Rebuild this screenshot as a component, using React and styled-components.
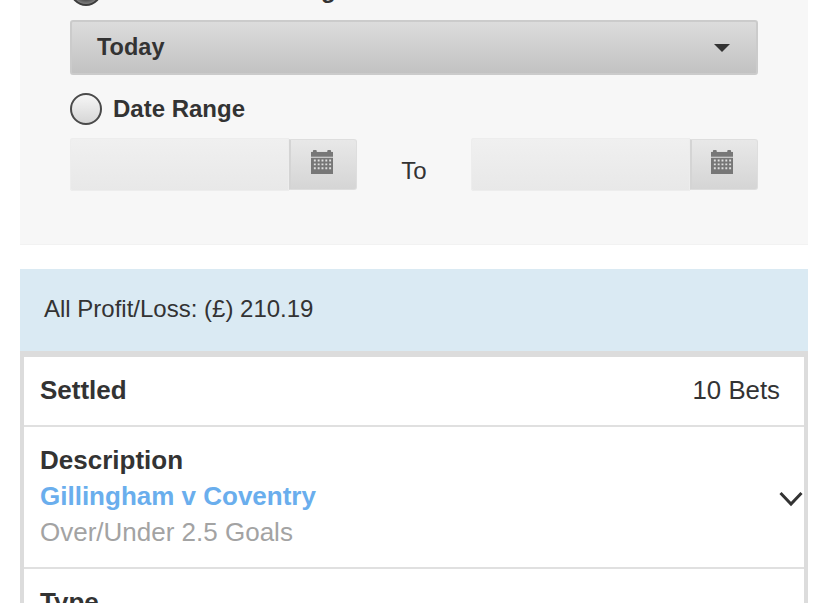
import React from 'react'
import styled, { createGlobalStyle } from 'styled-components'

const Global = createGlobalStyle`
  html, body { margin: 0; padding: 0; background: #fff; overflow: hidden; }
  body { font-family: "Liberation Sans", Arial, sans-serif; color: #333; }
`
const Page = styled.div`
  width: 828px;
  height: 603px;
  overflow: hidden;
  padding: 0 20px;
  box-sizing: border-box;
`
const FilterPanel = styled.div`
  background: #f7f7f7;
  height: 245px;
  padding: 0 50px;
  box-sizing: border-box;
  overflow: hidden;
  border-bottom: 1px solid #f2f2f2;
`
const RadioRow = styled.div`
  display: flex;
  align-items: center;
  gap: 11px;
  height: 32px;
  margin: ${p => p.$clipped ? '-26px 0 14px' : '18px 0 13px'};
`
const Radio = styled.span`
  width: 28px;
  height: 28px;
  border-radius: 50%;
  border: 2px solid ${p => p.$checked ? '#3c3c3c' : '#4a4a4a'};
  background: ${p => p.$checked
    ? 'radial-gradient(circle, #444 0 45%, #8a8a8a 75%)'
    : 'linear-gradient(#f6f6f6, #d6d6d6)'};
  flex: none;
`
const RadioLabel = styled.span`
  font-size: 24px;
  font-weight: 700;
`
const Select = styled.div`
  height: 55px;
  box-sizing: border-box;
  display: flex;
  align-items: center;
  justify-content: space-between;
  padding: 0 26px 1px 25px;
  font-size: 23.5px;
  font-weight: 700;
  background: linear-gradient(#dcdcdc, #c2c2c2);
  border: 2px solid #cbcbcb;
  border-radius: 3px;
`
const Caret = styled.span`
  width: 0;
  height: 0;
  margin-top: 1px;
  border-left: 8px solid transparent;
  border-right: 8px solid transparent;
  border-top: 8px solid #333;
`
const DateRow = styled.div`
  display: flex;
  align-items: center;
  justify-content: space-between;
`
const DateField = styled.div`
  display: flex;
  width: 287px;
  height: 53px;
`
const DateInput = styled.div`
  flex: 1;
  background: linear-gradient(#f0f0f0, #e8e8e8);
  border-radius: 3px 0 0 3px;
  box-shadow: inset 0 0 0 1px #ededed;
`
const DateButton = styled.div`
  width: 68px;
  margin-top: 1px;
  height: 51px;
  display: flex;
  align-items: center;
  justify-content: center;
  padding: 0 4px 5px 0;
  background: linear-gradient(#e8e8e8, #d5d5d5);
  border: 1px solid #dedede;
  border-left: 2px solid #d4d4d4;
  border-radius: 0 3px 3px 0;
  box-sizing: border-box;
`
const ToLabel = styled.span`
  font-size: 24px;
  margin-top: 12px;
`
const ProfitBar = styled.div`
  margin-top: 24px;
  height: 82px;
  display: flex;
  align-items: center;
  padding: 0 24px 2px;
  box-sizing: border-box;
  background: #daeaf3;
  font-size: 24px;
  color: #333;
`
const BetCard = styled.div`
  border: 4px solid #dcdcdc;
  border-top-width: 6px;
  border-bottom: 0;
  background: #fff;
`
const Row = styled.div`
  display: flex;
  align-items: center;
  justify-content: space-between;
  padding: ${p => p.$pad || '0 24px 2px 16px'};
  border-bottom: 2px solid #e0e0e0;
  min-height: 66px;
`
const Strong = styled.div`
  font-size: 26px;
  font-weight: 700;
  line-height: 36px;
  color: #333;
`
const Count = styled.span`
  font-size: 25.8px;
  color: #333;
`
const Match = styled.div`
  font-size: 26px;
  font-weight: 700;
  line-height: 36px;
  color: #6aaeed;
`
const Market = styled.div`
  font-size: 26px;
  line-height: 36px;
  color: #a3a3a3;
`
const ChevronSlot = styled.span`
  display: flex;
  margin-top: 6px;
`
const LastRow = styled.div`
  padding: 15px 16px 0;
`

const CalendarIcon = () => (
  <svg width="22" height="24" viewBox="0 0 23 25" fill="#777">
    <rect x="2" y="0" width="4" height="4" rx="1" />
    <rect x="17" y="0" width="4" height="4" rx="1" />
    <rect x="0" y="2" width="23" height="5" />
    <path fillRule="evenodd" d="M0 8h23v17H0z M3 10h2v2H3z M7 10h2v2H7z M11 10h2v2h-2z M15 10h2v2h-2z M19 10h2v2h-2z M3 14h2v2H3z M7 14h2v2H7z M11 14h2v2h-2z M15 14h2v2h-2z M19 14h2v2h-2z M3 18h2v2H3z M7 18h2v2H7z M11 18h2v2h-2z M15 18h2v2h-2z M19 18h2v2h-2z" />
  </svg>
)

const Chevron = () => (
  <svg width="24" height="16" viewBox="0 0 24 16" fill="none" stroke="#333" strokeWidth="3">
    <path d="M1.5 2 L12 13 L22.5 2" />
  </svg>
)

const DatePicker = () => (
  <DateField>
    <DateInput />
    <DateButton><CalendarIcon /></DateButton>
  </DateField>
)

export default function App() {
  return (
    <Page>
      <Global />
      <FilterPanel>
        <RadioRow $clipped>
          <Radio $checked />
          <RadioLabel>Bets Settled During</RadioLabel>
        </RadioRow>
        <Select>
          Today
          <Caret />
        </Select>
        <RadioRow>
          <Radio />
          <RadioLabel>Date Range</RadioLabel>
        </RadioRow>
        <DateRow>
          <DatePicker />
          <ToLabel>To</ToLabel>
          <DatePicker />
        </DateRow>
      </FilterPanel>
      <ProfitBar>All Profit/Loss: (£) 210.19</ProfitBar>
      <BetCard>
        <Row>
          <Strong>Settled</Strong>
          <Count>10 Bets</Count>
        </Row>
        <Row $pad="15px 1px 17px 16px">
          <div>
            <Strong>Description</Strong>
            <Match>Gillingham v Coventry</Match>
            <Market>Over/Under 2.5 Goals</Market>
          </div>
          <ChevronSlot><Chevron /></ChevronSlot>
        </Row>
        <LastRow>
          <Strong>Type</Strong>
        </LastRow>
      </BetCard>
    </Page>
  )
}
